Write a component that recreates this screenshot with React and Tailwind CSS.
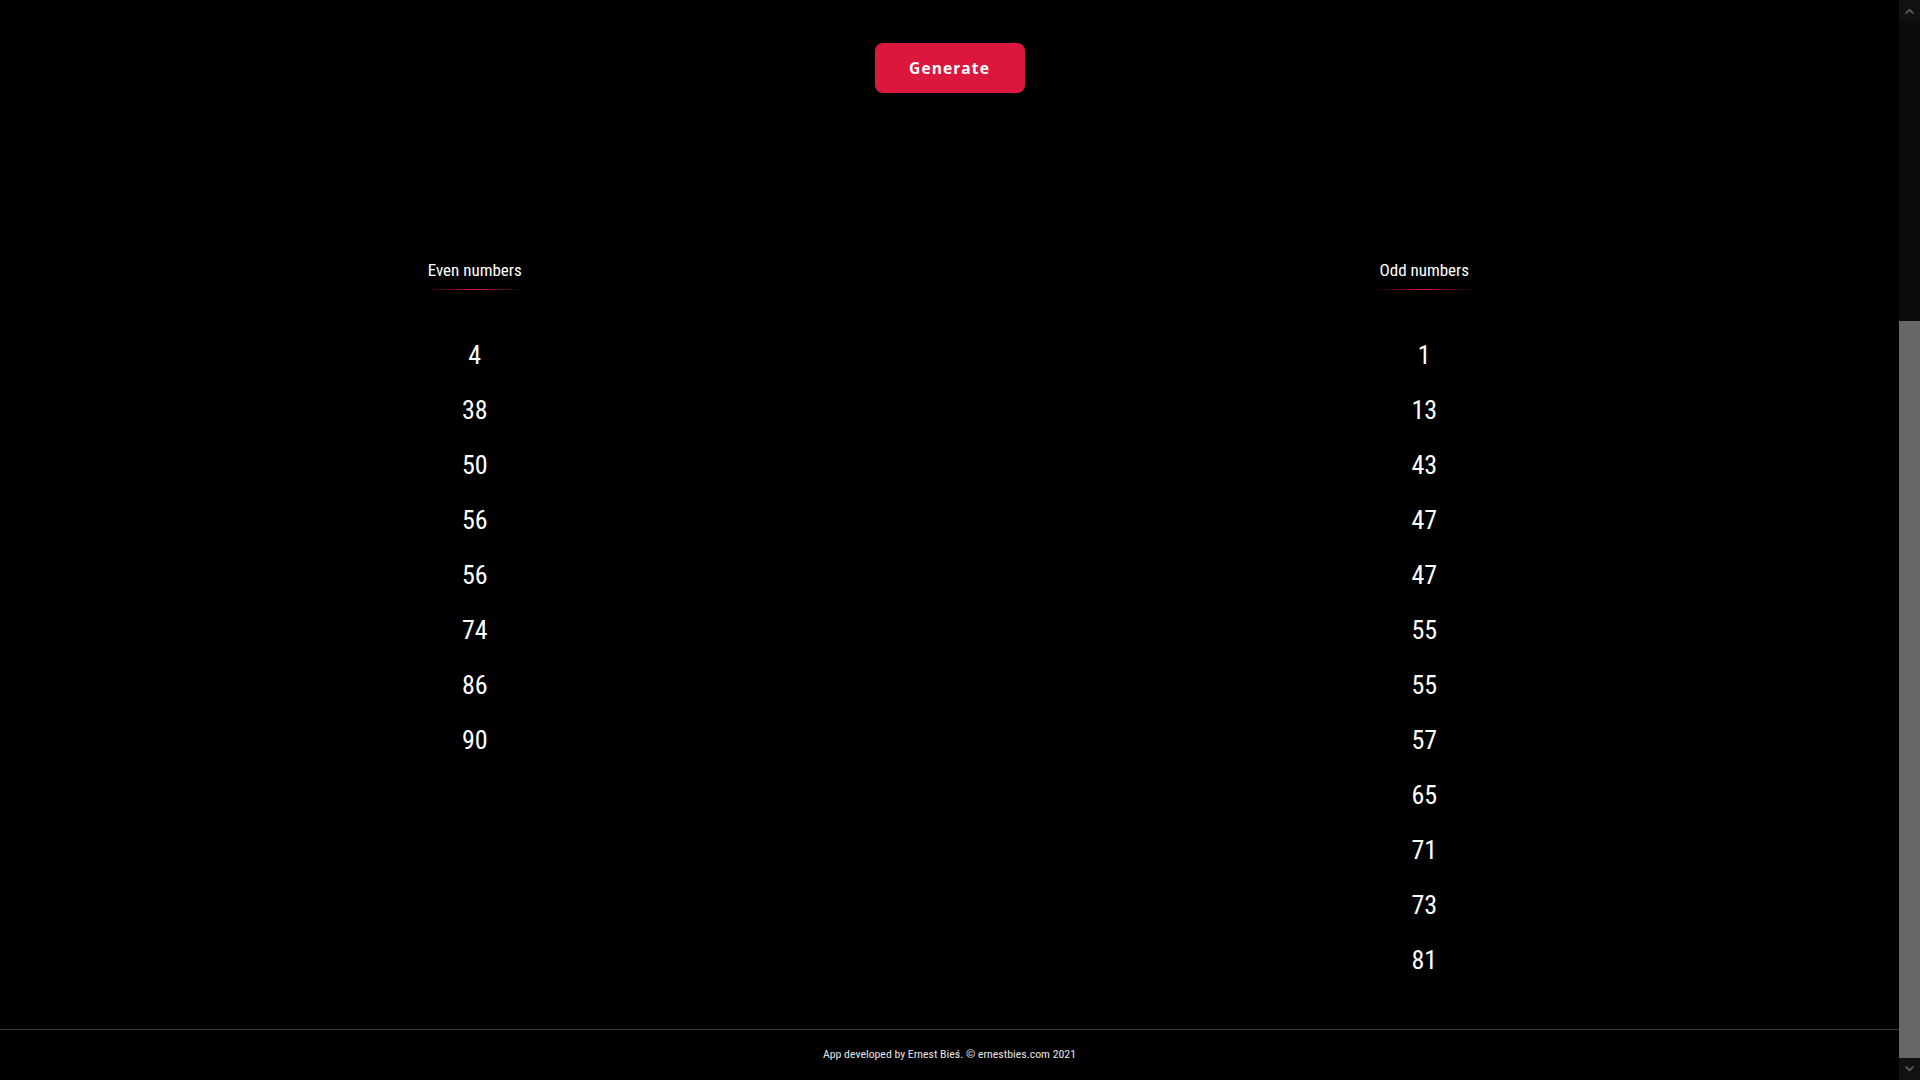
const EVEN = [4, 38, 50, 56, 56, 74, 86, 90];
const ODD = [1, 13, 43, 47, 47, 55, 55, 57, 65, 71, 73, 81];

const condensed = { fontFamily: "'Roboto Condensed', 'DejaVu Sans Condensed', Roboto, sans-serif" };

function NumberColumn({ title, numbers }) {
  return (
    <div className="flex flex-col items-center">
      <h2 className="text-[17px] leading-[24px] text-white">{title}</h2>
      <div className="mt-[7px] h-px w-[98px] bg-gradient-to-r from-transparent via-[#dc143c] to-transparent" />
      <ul className="mt-[38px] flex flex-col items-center">
        {numbers.map((n, i) => (
          <li key={i} className="text-[26px] leading-[55px] text-white">
            {n}
          </li>
        ))}
      </ul>
    </div>
  );
}

// browser scrollbar as it appears in the shot (page scrolled to the bottom)
function Scrollbar() {
  return (
    <aside className="flex w-[21px] shrink-0 flex-col bg-[#0b0b0d]">
      <div className="flex h-[21px] items-center justify-center bg-[#111113]">
        <svg width="9" height="6" viewBox="0 0 9 6">
          <path d="M0 5 L4.5 0.5 L9 5 L7.5 6 L4.5 3 L1.5 6 Z" fill="#5c5c5e" />
        </svg>
      </div>
      <div className="h-[300px]" />
      <div className="flex-1 bg-[#676767]" />
      <div className="flex h-[22px] items-center justify-center bg-[#111113]">
        <svg width="9" height="6" viewBox="0 0 9 6">
          <path d="M0 1 L4.5 5.5 L9 1 L7.5 0 L4.5 3 L1.5 0 Z" fill="#5c5c5e" />
        </svg>
      </div>
    </aside>
  );
}

export default function App() {
  return (
    <div className="flex h-screen overflow-hidden bg-black" style={condensed}>
      <main className="flex min-w-0 flex-1 flex-col">
        <div className="flex justify-center pt-[43px]">
          <button
            type="button"
            className="h-[50px] w-[150px] rounded-lg bg-[#dc173e] pt-[2px] text-[15.5px] font-bold tracking-[1.1px] text-white"
            style={{ fontFamily: "'Open Sans', 'Noto Sans', sans-serif" }}
          >
            Generate
          </button>
        </div>

        <div className="mt-[165px] grid grid-cols-2">
          <NumberColumn title="Even numbers" numbers={EVEN} />
          <NumberColumn title="Odd numbers" numbers={ODD} />
        </div>

        <footer className="mt-auto flex h-[51px] items-center justify-center border-t border-[#3a3a3a] text-[11.8px] text-[#e6e6e6]">
          App developed by Ernest Bieś. © ernestbies.com 2021
        </footer>
      </main>
      <Scrollbar />
    </div>
  );
}
